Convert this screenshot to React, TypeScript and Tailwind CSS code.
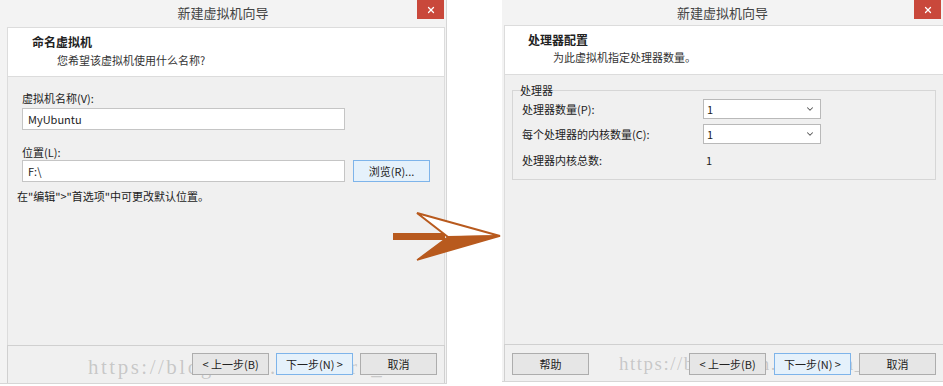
import React from 'react';
import { X, ChevronDown } from 'lucide-react';

const cjk = "font-['Microsoft_YaHei','Noto_Sans_CJK_SC',sans-serif]";

function Btn({ children, primary, className = '' }: { children: React.ReactNode; primary?: boolean; className?: string }) {
  return (
    <div
      className={`relative h-[22px] w-[77px] flex items-center justify-center text-[11px] text-[#222] border ${
        primary ? 'border-[#7eb4ea] bg-[#e5f1fb]' : 'border-[#adadad] bg-[#e6e6e6]'
      } ${className}`}
    >
      {children}
    </div>
  );
}

function TitleBar({ h }: { h: string }) {
  return (
    <div className={`${h} grid grid-cols-[1fr_auto_1fr] items-start`}>
      <div />
      <div className="text-[13px] leading-[26px] text-[#444]">新建虚拟机向导</div>
      <div className="flex justify-end">
        <div className="w-[27px] h-[19px] bg-[#c9483b] flex items-center justify-center mr-[2px]">
          <X className="w-[10px] h-[10px] text-white" strokeWidth={3} />
        </div>
      </div>
    </div>
  );
}

function Watermark({ className }: { className: string }) {
  return (
    <div
      className={`absolute pointer-events-none font-['Liberation_Serif',serif] text-[rgba(150,150,150,0.45)] whitespace-nowrap ${className}`}
    >
      https://blog.csdn.net/flora_zhao
    </div>
  );
}

function Select() {
  return (
    <div className="h-[20px] w-[118px] bg-white border border-[#b9b9b9] flex items-center justify-between pl-[3px] pr-[5px] text-[11px]">
      <span>1</span>
      <ChevronDown className="w-[10px] h-[10px] text-[#555]" strokeWidth={2.5} />
    </div>
  );
}

function Arrow() {
  return (
    <svg className="absolute left-[390px] top-[210px]" width="113" height="53" viewBox="0 0 113 53">
      <rect x="3" y="23" width="52" height="7" fill="#b85a1e" />
      <polygon points="27,3 110,26 58,27" fill="#fff" stroke="#b85a1e" strokeWidth="2" strokeLinejoin="miter" />
      <polygon points="58,27 110,26 27,50" fill="#b85a1e" stroke="#b85a1e" strokeWidth="1.5" />
    </svg>
  );
}

export default function App() {
  return (
    <div className={`relative w-[943px] h-[386px] bg-white flex text-[#222] ${cjk}`}>
      {/* left dialog */}
      <div className="w-[447px] h-[384px] bg-[#f3f3f3] border-r border-b border-[#d6d6d6] flex flex-col">
        <TitleBar h="h-[27px]" />
        <div className="flex-1 flex flex-col pl-[7px] pr-[1px]">
          <div className="h-[50px] bg-white border border-[#dcdcdc] pl-[24px] pt-[6px]">
            <div className="text-[12px] leading-[16px] font-bold">命名虚拟机</div>
            <div className="text-[11px] leading-[16px] mt-[2px] pl-[25px] text-[#333]">您希望该虚拟机使用什么名称?</div>
          </div>
          <div className="flex-1 bg-[#f0f0f0] border-x border-[#dcdcdc] pl-[14px] pt-[13px] text-[11px]">
            <div className="leading-[16px]">虚拟机名称(V):</div>
            <div className="mt-[2px] w-[323px] h-[22px] bg-white border border-[#c5c5c5] flex items-center pl-[5px]">MyUbuntu</div>
            <div className="leading-[16px] mt-[14px]">位置(L):</div>
            <div className="flex gap-[8px]">
              <div className="w-[323px] h-[22px] bg-white border border-[#c5c5c5] flex items-center pl-[5px]">F:\</div>
              <Btn primary className="w-[76px]">浏览(R)...</Btn>
            </div>
            <div className="leading-[16px] mt-[6px] -ml-[5px]">{'在"编辑">"首选项"中可更改默认位置。'}</div>
          </div>
          <div className="relative h-[38px] bg-[#f0f0f0] border-x border-t border-[#d0d0d0] flex justify-end gap-[7px] pt-[7px] pr-[7px]">
            <Watermark className="left-[80px] top-[9px] text-[21px] leading-[24px] tracking-[2.5px]" />
            <Btn>&lt; 上一步(B)</Btn>
            <Btn primary>下一步(N) &gt;</Btn>
            <Btn>取消</Btn>
          </div>
        </div>
      </div>

      <div className="w-[55px]" />

      {/* right dialog */}
      <div className="w-[441px] h-[382px] bg-[#f3f3f3] border-b border-[#d6d6d6] flex flex-col">
        <TitleBar h="h-[25px]" />
        <div className="flex-1 flex flex-col pl-[2px]">
          <div className="h-[50px] bg-white border border-r-0 border-[#dcdcdc] pl-[23px] pt-[6px]">
            <div className="text-[12px] leading-[16px] font-bold">处理器配置</div>
            <div className="text-[11px] leading-[16px] mt-[1px] pl-[25px] text-[#333]">为此虚拟机指定处理器数量。</div>
          </div>
          <div className="flex-1 bg-[#f0f0f0] border-l border-[#dcdcdc] pt-[7px] pl-[7px] pr-[7px] text-[11px]">
            <fieldset className="border border-[#d6d6d6] pl-[7px] pb-[11px]">
              <legend className="leading-[16px]">处理器</legend>
              <div className="grid grid-cols-[181px_118px] items-center gap-y-[5px] ml-[2px] mt-[1px]">
                <div>处理器数量(P):</div>
                <Select />
                <div>每个处理器的内核数量(C):</div>
                <Select />
                <div className="mt-[3px] leading-[16px]">处理器内核总数:</div>
                <div className="mt-[3px] leading-[16px] pl-[3px]">1</div>
              </div>
            </fieldset>
          </div>
          <div className="relative h-[37px] bg-[#f0f0f0] border-l border-t border-[#d0d0d0] flex gap-[8px] pt-[8px] pl-[7px] pr-[7px]">
            <Watermark className="left-[114px] top-[7px] text-[19px] leading-[24px] tracking-[1.5px]" />
            <Btn className="w-[76px]">帮助</Btn>
            <div className="relative ml-auto flex gap-[8px]">
              <Btn>&lt; 上一步(B)</Btn>
              <Btn primary>下一步(N) &gt;</Btn>
              <Btn>取消</Btn>
            </div>
          </div>
        </div>
      </div>

      <Arrow />
    </div>
  );
}
